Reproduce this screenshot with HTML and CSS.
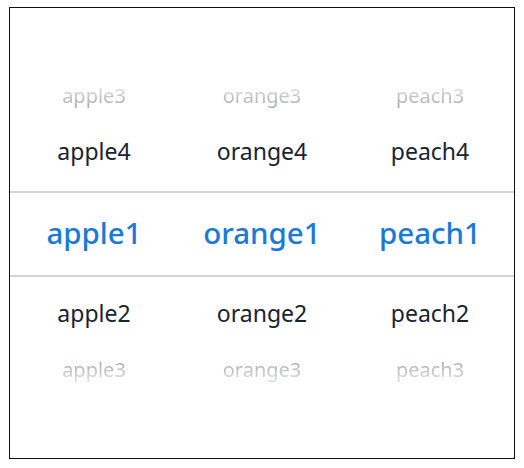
FILE: index.html
```html
<!DOCTYPE html>
<html lang="en">
<head>
    <meta charset="UTF-8">
    <meta name="viewport" content="width=device-width, initial-scale=1.0">
    <title>Fruit Picker</title>
    <link rel="stylesheet" href="styles.css">
</head>
<body>
    <div class="frame">
        <div class="picker">
            <!-- Options above the selection -->
            <div class="row far top">
                <span>apple3</span><span>orange3</span><span>peach3</span>
            </div>
            <div class="row">
                <span>apple4</span><span>orange4</span><span>peach4</span>
            </div>

            <!-- Current selection -->
            <div class="row selected">
                <span>apple1</span><span>orange1</span><span>peach1</span>
            </div>

            <!-- Options below the selection -->
            <div class="row">
                <span>apple2</span><span>orange2</span><span>peach2</span>
            </div>
            <div class="row far bottom">
                <span>apple3</span><span>orange3</span><span>peach3</span>
            </div>
        </div>
    </div>
</body>
</html>
```

FILE: styles.css
```css
body {
    margin: 0;
    padding: 7px 9px;
    background-color: #ffffff;
    font-family: "Noto Sans", "Open Sans", sans-serif;
    color: #182431; /* Primary text */
}

.frame {
    width: 506px;
    height: 452px;
    box-sizing: border-box;
    border: 1px solid #111111;
}

.picker {
    height: 100%;
    display: flex;
    flex-direction: column;
    padding-top: 61px;
    box-sizing: border-box;
}

.row {
    display: grid;
    grid-template-columns: repeat(3, 1fr);
    align-items: center;
    height: 56px;
    font-size: 23px;
}

.row span {
    text-align: center;
    padding-bottom: 4px; /* optical centering of the glyphs */
}

.row.selected {
    height: 82px;
    margin: 10px 0;
    border-top: 2px solid #d4d4d4;
    border-bottom: 2px solid #d4d4d4;
    color: #1a7ad6; /* Selected option blue */
    font-size: 29.5px;
    font-weight: 500;
}

.row.far {
    font-size: 20px;
    color: #acb0b4;
}

/* Fade the outermost options toward the edges */
.row.far.top {
    -webkit-mask-image: linear-gradient(to bottom, rgba(0, 0, 0, 0.45) 35%, #000 65%);
    mask-image: linear-gradient(to bottom, rgba(0, 0, 0, 0.45) 35%, #000 65%);
}

.row.far.bottom {
    -webkit-mask-image: linear-gradient(to top, rgba(0, 0, 0, 0.45) 35%, #000 65%);
    mask-image: linear-gradient(to top, rgba(0, 0, 0, 0.45) 35%, #000 65%);
}
```
